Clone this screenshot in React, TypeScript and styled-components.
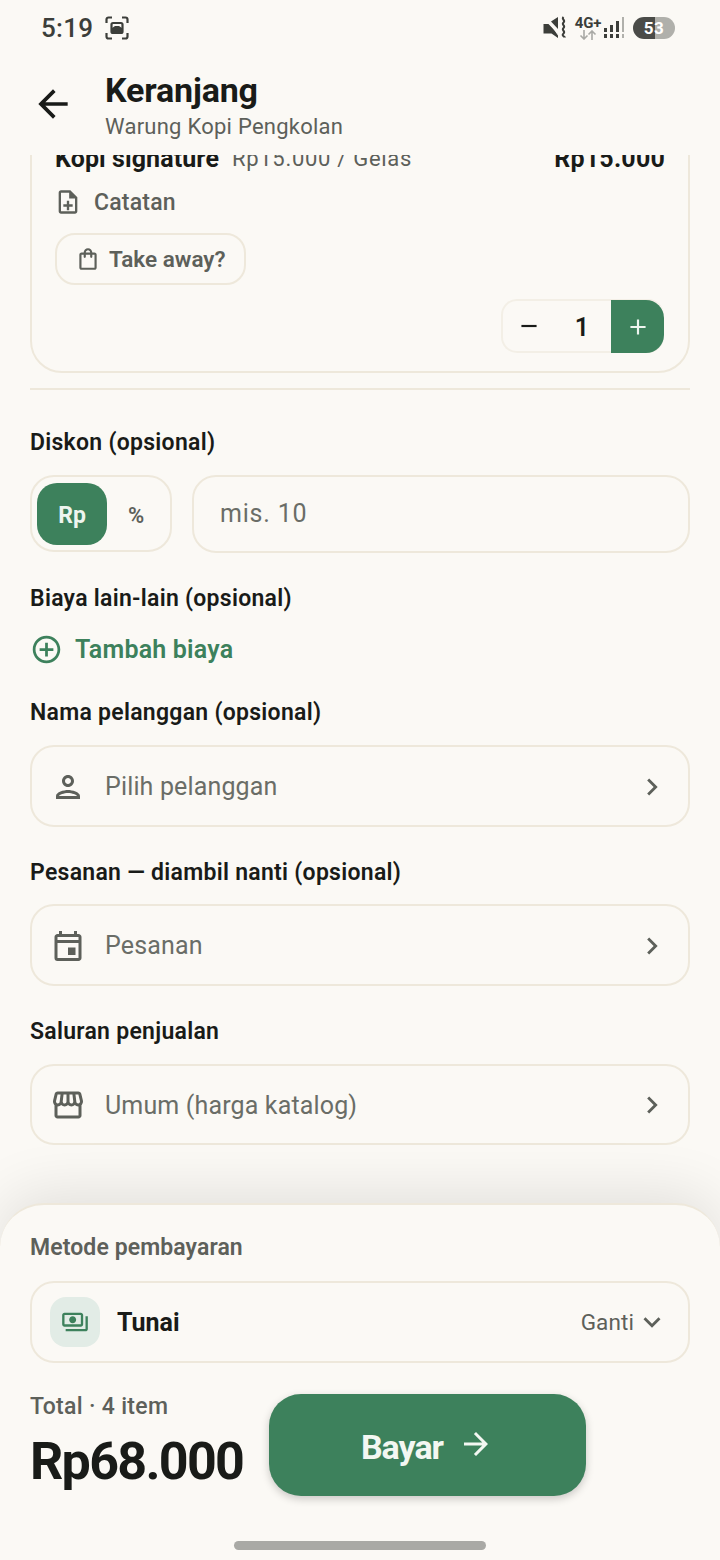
import React from "react";
import styled, { createGlobalStyle } from "styled-components";
import {
  MdAdd, MdArrowBack, MdArrowForward, MdChevronRight, MdKeyboardArrowDown, MdOutlineAddCircleOutline,
  MdOutlineEvent, MdOutlineNoteAdd, MdOutlinePayments, MdOutlinePerson, MdOutlineShoppingBag,
  MdOutlineStorefront, MdRemove,
} from "react-icons/md";

const GREEN = "#3d815c";
const INK = "#191b18";
const MUTED = "#5d605a";
const LINE = "#eee8db";
const BG = "#fbf9f5";

const Global = createGlobalStyle`
  html, body { margin: 0; padding: 0; background: ${BG}; }
  body { font-family: Roboto, "Liberation Sans", sans-serif; color: ${INK}; }
  * { box-sizing: border-box; }
`;

const Page = styled.div`
  width: 720px; height: 1560px; display: flex; flex-direction: column; overflow: hidden; background: ${BG};
`;
const StatusBar = styled.div`
  height: 56px; flex: none; display: flex; align-items: center; padding: 0 45px 0 41px; color: #3c3e3a;
`;
const Time = styled.span`
  font-size: 26px; font-weight: 500; letter-spacing: 0.3px; margin-right: 12px;
`;
const StatusRight = styled.div`
  margin-left: auto; display: flex; align-items: center;
`;
const NetBlock = styled.div`
  width: 30px; margin: 0 0 0 5px; display: flex; flex-direction: column; align-items: center;
`;
const NetText = styled.span`
  font-size: 15px; line-height: 13px; font-weight: 700; letter-spacing: -0.2px; color: #3c3e3a;
`;
const Battery = styled.span`
  width: 42px; height: 22px; margin-left: 8px; border-radius: 11px; display: flex; align-items: center; justify-content: center;
  font-size: 17px; font-weight: 700; color: #fff; letter-spacing: 0.5px;
  background: linear-gradient(90deg, #4a4b48 0 53%, #b0b0ab 53% 100%);
`;
const Header = styled.header`
  height: 99px; flex: none; display: flex; align-items: flex-start; padding: 0 0 0 31px; position: relative; z-index: 1; background: ${BG};
`;
const BackIcon = styled(MdArrowBack)`
  font-size: 44px; color: ${INK}; margin-top: 26px; flex: none;
`;
const HeaderText = styled.div`
  margin: 14px 0 0 30px; display: flex; flex-direction: column;
`;
const Title = styled.h1`
  margin: 0; font-size: 34px; line-height: 40px; font-weight: 700; letter-spacing: -0.15px; color: ${INK};
`;
const Subtitle = styled.span`
  margin-top: 2px; font-size: 22px; line-height: 30px; color: ${MUTED}; letter-spacing: 0.25px;
`;
const Scroll = styled.main`
  height: 1048px; flex: none; overflow: hidden; padding: 0 30px;
`;
const Card = styled.section`
  margin-top: -34px; border: 2px solid ${LINE}; border-radius: 32px; padding: 20px 24px 18px 23px; display: flex; flex-direction: column;
`;
const ItemRow = styled.div`
  height: 30px; display: flex; align-items: center;
`;
const ItemName = styled.span`
  font-size: 25px; font-weight: 700; letter-spacing: 0.1px;
`;
const ItemPrice = styled.span`
  margin-left: 13px; font-size: 22px; color: ${MUTED}; letter-spacing: 0.7px;
`;
const ItemTotal = styled.span`
  margin-left: auto; margin-right: -1px; font-size: 25px; font-weight: 700; letter-spacing: 0.2px;
`;
const NoteRow = styled.div`
  height: 30px; margin-top: 14px; display: flex; align-items: center; color: ${MUTED}; font-size: 23px; font-weight: 500; letter-spacing: 0.2px;
  svg { font-size: 28px; margin-left: -1px; margin-right: 12px; }
`;
const Chip = styled.div`
  width: 191px; height: 52px; margin-top: 16px; border: 2px solid ${LINE}; border-radius: 20px; display: flex; align-items: center;
  padding-left: 18px; gap: 8px; color: ${MUTED}; font-size: 22.5px; font-weight: 600;
  svg { font-size: 26px; flex: none; }
`;
const Stepper = styled.div`
  align-self: flex-end; width: 163px; height: 54px; margin-top: 14px; display: flex; align-items: stretch;
  border: 2px solid #f3efe6; border-right: 0; border-radius: 16px; background: ${BG};
`;
const StepMinus = styled.span`
  width: 52px; display: flex; align-items: center; justify-content: center; font-size: 26px; color: ${INK};
`;
const StepValue = styled.span`
  width: 56px; padding: 2px 2px 0 0; display: flex; align-items: center; justify-content: center; font-size: 25px; font-weight: 600;
`;
const StepPlus = styled.span`
  width: 53px; margin: -1px 0 -2px; display: flex; align-items: center; justify-content: center; background: ${GREEN};
  color: #eef5ef; font-size: 26px; border-radius: 0 18px 18px 0;
`;
const Divider = styled.hr`
  margin: 15px 0 0; border: 0; height: 2px; background: ${LINE};
`;
const Label = styled.label<{ $top: number; $bottom?: number }>`
  display: block; height: 26px; line-height: 28px; margin-top: ${(p) => p.$top}px; margin-bottom: ${(p) => p.$bottom ?? 20}px;
  font-size: 23px; font-weight: 600; letter-spacing: 0.28px; color: ${INK};
`;
const DiscountRow = styled.div`
  height: 78px; display: flex; gap: 20px;
`;
const Toggle = styled.div`
  width: 142px; border: 2px solid ${LINE}; border-radius: 24px; padding: 6px 5px 5px; display: flex; align-items: stretch; height: 77px;
`;
const ToggleOn = styled.span`
  width: 70px; background: ${GREEN}; color: #eef5ef; border-radius: 20px; display: flex; align-items: center; justify-content: center;
  padding-top: 3px; font-size: 23px; font-weight: 700;
`;
const ToggleOff = styled.span`
  flex: 1; padding-top: 3px; display: flex; align-items: center; justify-content: center; font-size: 22px; font-weight: 600; color: ${MUTED};
`;
const InputBox = styled.div`
  flex: 1; border: 2px solid ${LINE}; border-radius: 24px; display: flex; align-items: center; padding: 0 0 2px 26px;
  font-size: 25px; color: #6a6d67; letter-spacing: 0.8px;
`;
const AddRow = styled.div`
  height: 32px; display: flex; align-items: center; gap: 12px; color: ${GREEN}; font-size: 25px; font-weight: 600; letter-spacing: 0.2px;
  svg { font-size: 33px; color: ${GREEN}; }
`;
const Field = styled.div<{ $h?: number }>`
  height: ${(p) => p.$h ?? 82}px; border: 2px solid ${LINE}; border-radius: 24px; display: flex; align-items: center;
  padding: 1px 19px 0 18px; color: #6a6d67; font-size: 25px; letter-spacing: 0.15px;
`;
const FieldIcon = styled.span`
  width: 36px; height: 36px; margin-right: 19px; flex: none; display: flex; align-items: center; justify-content: center; color: ${MUTED}; font-size: 36px;
`;
const Chevron = styled(MdChevronRight)`
  margin-left: auto; font-size: 34px; color: ${MUTED}; flex: none;
`;
const Sheet = styled.footer`
  flex: 1; position: relative; z-index: 2; background: ${BG}; border-radius: 44px 44px 0 0; border-top: 2px solid ${LINE};
  box-shadow: 0 -8px 60px rgba(0, 0, 0, 0.11); padding: 29px 30px 0; display: flex; flex-direction: column;
`;
const SheetLabel = styled.div`
  height: 26px; line-height: 28px; font-size: 23px; font-weight: 600; color: ${MUTED}; letter-spacing: 0.1px;
`;
const PayField = styled.div`
  height: 82px; margin-top: 21px; border: 2px solid ${LINE}; border-radius: 24px; display: flex; align-items: center; padding: 0 19px 0 18px;
`;
const PayIcon = styled.span`
  width: 50px; height: 50px; border-radius: 16px; background: #e2ece6; color: ${GREEN}; font-size: 28px; display: flex; align-items: center; justify-content: center; flex: none;
`;
const PayName = styled.span`
  margin-left: 17px; font-size: 25px; font-weight: 700;
`;
const PayChange = styled.span`
  margin-left: auto; display: flex; align-items: center; gap: 0; font-size: 22.5px; color: ${MUTED}; letter-spacing: 0.1px;
  svg { font-size: 34px; margin-left: 1px; }
`;
const TotalRow = styled.div`
  margin-top: 31px; display: flex; align-items: flex-start;
`;
const TotalCol = styled.div`
  width: 239px; flex: none; display: flex; flex-direction: column;
`;
const TotalLabel = styled.span`
  height: 26px; line-height: 26px; font-size: 23px; font-weight: 500; color: ${MUTED}; letter-spacing: 0.3px;
`;
const TotalValue = styled.span`
  margin-top: 12px; line-height: 60px; font-size: 52px; font-weight: 700; letter-spacing: -1.7px; color: ${INK}; white-space: nowrap;
`;
const PayButton = styled.button`
  width: 317px; height: 102px; border: 0; border-radius: 32px; background: ${GREEN}; color: #f3f7f2; display: flex; align-items: center; justify-content: center; gap: 15px;
  font-family: inherit; font-size: 34px; font-weight: 700; letter-spacing: -1px; box-shadow: 0 3px 8px rgba(0, 0, 0, 0.2); padding: 3px 0 0 0;
  svg { font-size: 36px; margin-top: -5px; }
`;
const HomeBar = styled.div`
  position: absolute; left: 234px; bottom: 10px; width: 252px; height: 9px; border-radius: 5px; background: #a9a9a5;
`;

const ScreenshotIcon = () => (
  <svg width="24" height="24" viewBox="0 0 24 24" fill="none" stroke="#3c3e3a" strokeWidth="2.2">
    <path d="M1.5 7V3.5a2 2 0 0 1 2-2H7M17 1.5h3.5a2 2 0 0 1 2 2V7M22.5 17v3.5a2 2 0 0 1-2 2H17M7 22.5H3.5a2 2 0 0 1-2-2V17" />
    <rect x="6.5" y="7" width="11" height="10" rx="1.5" />
    <path d="M7 12l3-2h4l3 2v4.5H7z" fill="#3c3e3a" stroke="none" />
  </svg>
);
const MuteIcon = () => (
  <svg width="25" height="24" viewBox="0 0 25 24" fill="#3c3e3a">
    <path d="M0.5 8H5.5L15 18V22L8.5 17.5H0.5zM8 5.5 15 1V13z" />
    <path d="M3 1l13 19" stroke="#fbf9f5" strokeWidth="1.2" />
    <path d="M20.5 1c-2.6 2.5 2.6 3 0 5.5s2.6 3 0 5.5 2.6 3 0 5.5 1.5 3 1.5 4" fill="none" stroke="#3c3e3a" strokeWidth="2" />
  </svg>
);
const ArrowsIcon = () => (
  <svg width="18" height="10" viewBox="0 0 18 10" fill="none" stroke="#a9a9a5" strokeWidth="1.6">
    <path d="M5 0v9M1.5 5.5 5 9l3.5-3.5M13 10V1M9.5 4.5 13 1l3.5 3.5" />
  </svg>
);
const SignalIcon = () => (
  <svg width="22" height="24" viewBox="0 0 22 24" fill="#3c3e3a">
    <path d="M1 12h3v4H1zM7 9h3v7H7zM13 5h3v11h-3z" />
    <path d="M19 1h2v15h-2z" fill="#b0b0ab" />
    <path d="M1 18h3v4H1zM7 18h3v4H7zM13 18h3v4h-3z" />
    <path d="M19 18h2v4h-2z" fill="#b0b0ab" />
  </svg>
);

export default function App() {
  return (
    <Page>
      <Global />
      <StatusBar>
        <Time>5:19</Time>
        <ScreenshotIcon />
        <StatusRight>
          <MuteIcon />
          <NetBlock>
            <NetText>4G+</NetText>
            <ArrowsIcon />
          </NetBlock>
          <SignalIcon />
          <Battery>53</Battery>
        </StatusRight>
      </StatusBar>
      <Header>
        <BackIcon />
        <HeaderText>
          <Title>Keranjang</Title>
          <Subtitle>Warung Kopi Pengkolan</Subtitle>
        </HeaderText>
      </Header>
      <Scroll>
        <Card>
          <ItemRow>
            <ItemName>Kopi signature</ItemName>
            <ItemPrice>Rp15.000 / Gelas</ItemPrice>
            <ItemTotal>Rp15.000</ItemTotal>
          </ItemRow>
          <NoteRow><MdOutlineNoteAdd />Catatan</NoteRow>
          <Chip><MdOutlineShoppingBag />Take away?</Chip>
          <Stepper>
            <StepMinus><MdRemove /></StepMinus>
            <StepValue>1</StepValue>
            <StepPlus><MdAdd /></StepPlus>
          </Stepper>
        </Card>
        <Divider />
        <Label $top={39}>Diskon (opsional)</Label>
        <DiscountRow>
          <Toggle>
            <ToggleOn>Rp</ToggleOn>
            <ToggleOff>%</ToggleOff>
          </Toggle>
          <InputBox>mis. 10</InputBox>
        </DiscountRow>
        <Label $top={32} $bottom={22}>Biaya lain-lain (opsional)</Label>
        <AddRow><MdOutlineAddCircleOutline />Tambah biaya</AddRow>
        <Label $top={34}>Nama pelanggan (opsional)</Label>
        <Field>
          <FieldIcon><MdOutlinePerson /></FieldIcon>
          Pilih pelanggan
          <Chevron />
        </Field>
        <Label $top={32} $bottom={19}>Pesanan — diambil nanti (opsional)</Label>
        <Field>
          <FieldIcon><MdOutlineEvent /></FieldIcon>
          Pesanan
          <Chevron />
        </Field>
        <Label $top={32}>Saluran penjualan</Label>
        <Field $h={81}>
          <FieldIcon><MdOutlineStorefront /></FieldIcon>
          Umum (harga katalog)
          <Chevron />
        </Field>
      </Scroll>
      <Sheet>
        <SheetLabel>Metode pembayaran</SheetLabel>
        <PayField>
          <PayIcon><MdOutlinePayments /></PayIcon>
          <PayName>Tunai</PayName>
          <PayChange>Ganti<MdKeyboardArrowDown /></PayChange>
        </PayField>
        <TotalRow>
          <TotalCol>
            <TotalLabel>Total · 4 item</TotalLabel>
            <TotalValue>Rp68.000</TotalValue>
          </TotalCol>
          <PayButton>Bayar<MdArrowForward /></PayButton>
        </TotalRow>
        <HomeBar />
      </Sheet>
    </Page>
  );
}
